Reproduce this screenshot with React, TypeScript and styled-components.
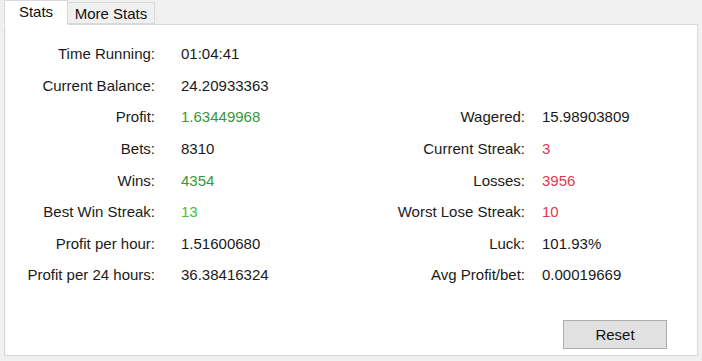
import React from "react";
import styled, { createGlobalStyle } from "styled-components";

const Global = createGlobalStyle`
  html, body { margin: 0; padding: 0; background: #f0f0f0; }
  body { font-family: "Liberation Sans", Arial, sans-serif; }
`;

const Window = styled.div`
  width: 702px;
  height: 361px;
  box-sizing: border-box;
  padding: 0 4px 5px 4px;
  display: flex;
  flex-direction: column;
  background: #f0f0f0;
`;

const TabStrip = styled.div`
  display: flex;
  align-items: flex-end;
  height: 24px;
  position: relative;
  z-index: 1;
`;

const Tab = styled.div<{ $active?: boolean }>`
  box-sizing: border-box;
  font-size: 15px;
  color: #111;
  display: flex;
  align-items: center;
  justify-content: center;
  border: 1px solid #d9d9d9;
  ${(p) =>
    p.$active
      ? `height: 25px; margin-bottom: -1px; width: 64px; background: #fff; border-bottom-color: #fff; padding-bottom: 2px;`
      : `height: 22px; width: 87px; background: #f0f0f0; border-left: none; padding-top: 1px;`}
`;

const Panel = styled.div`
  flex: 1;
  background: #fff;
  border: 1px solid #d9d9d9;
  box-shadow: inset 1px 0 0 #f4f4f4;
  display: flex;
  flex-direction: column;
  padding: 13px 0 6px 0;
`;

const Grid = styled.div`
  display: grid;
  grid-template-columns: 150px 184px 186px 1fr;
  grid-auto-rows: 31.6px;
  align-items: center;
  font-size: 15px;
`;

const Label = styled.div<{ $col: number }>`
  grid-column: ${(p) => p.$col};
  text-align: right;
  color: #1a1a1a;
  white-space: nowrap;
`;

const Value = styled.div<{ $col: number; $tone?: "green" | "lime" | "red" }>`
  grid-column: ${(p) => p.$col};
  padding-left: ${(p) => (p.$col === 2 ? 26 : 17)}px;
  white-space: nowrap;
  color: ${(p) =>
    p.$tone === "green"
      ? "#3a963a"
      : p.$tone === "lime"
      ? "#3cbf3c"
      : p.$tone === "red"
      ? "#e03a50"
      : "#1a1a1a"};
`;

const Footer = styled.div`
  margin-top: auto;
  display: flex;
  justify-content: flex-end;
  padding-right: 30px;
`;

const Button = styled.button`
  width: 104px;
  height: 29px;
  background: #e1e1e1;
  border: 1px solid #adadad;
  font-family: "Liberation Sans", Arial, sans-serif;
  font-size: 15px;
  color: #111;
  padding: 0;
`;

type Cell = { label: string; value: string; tone?: "green" | "lime" | "red" };
type Row = { left: Cell; right?: Cell };

const rows: Row[] = [
  { left: { label: "Time Running:", value: "01:04:41" } },
  { left: { label: "Current Balance:", value: "24.20933363" } },
  {
    left: { label: "Profit:", value: "1.63449968", tone: "green" },
    right: { label: "Wagered:", value: "15.98903809" },
  },
  {
    left: { label: "Bets:", value: "8310" },
    right: { label: "Current Streak:", value: "3", tone: "red" },
  },
  {
    left: { label: "Wins:", value: "4354", tone: "green" },
    right: { label: "Losses:", value: "3956", tone: "red" },
  },
  {
    left: { label: "Best Win Streak:", value: "13", tone: "lime" },
    right: { label: "Worst Lose Streak:", value: "10", tone: "red" },
  },
  {
    left: { label: "Profit per hour:", value: "1.51600680" },
    right: { label: "Luck:", value: "101.93%" },
  },
  {
    left: { label: "Profit per 24 hours:", value: "36.38416324" },
    right: { label: "Avg Profit/bet:", value: "0.00019669" },
  },
];

export default function App() {
  return (
    <>
      <Global />
      <Window>
        <TabStrip>
          <Tab $active>Stats</Tab>
          <Tab>More Stats</Tab>
        </TabStrip>
        <Panel>
          <Grid>
            {rows.map((r, i) => (
              <React.Fragment key={i}>
                <Label $col={1} style={{ gridRow: i + 1 }}>{r.left.label}</Label>
                <Value $col={2} $tone={r.left.tone} style={{ gridRow: i + 1 }}>
                  {r.left.value}
                </Value>
                {r.right && (
                  <>
                    <Label $col={3} style={{ gridRow: i + 1 }}>{r.right.label}</Label>
                    <Value $col={4} $tone={r.right.tone} style={{ gridRow: i + 1 }}>
                      {r.right.value}
                    </Value>
                  </>
                )}
              </React.Fragment>
            ))}
          </Grid>
          <Footer>
            <Button>Reset</Button>
          </Footer>
        </Panel>
      </Window>
    </>
  );
}
